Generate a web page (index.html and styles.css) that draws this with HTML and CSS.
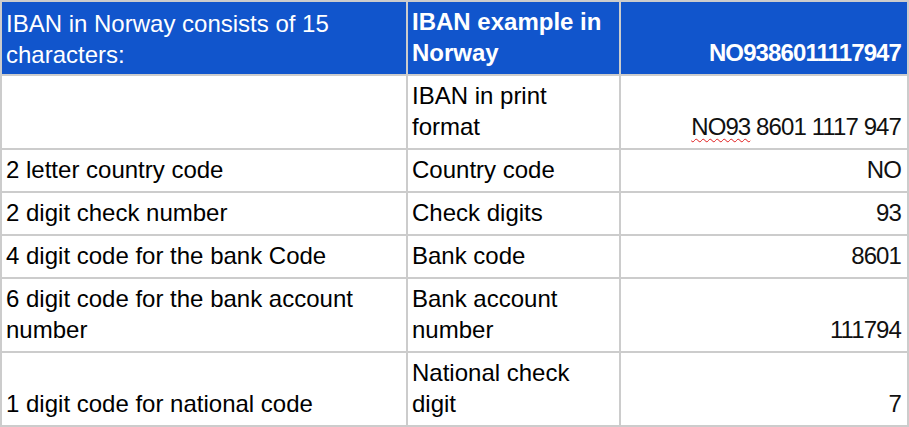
FILE: index.html
```html
<!DOCTYPE html>
<html lang="en">
<head>
<meta charset="utf-8">
<title>IBAN in Norway</title>
<link rel="stylesheet" href="styles.css">
</head>
<body>
<table class="iban">
  <colgroup>
    <col class="c1">
    <col class="c2">
    <col class="c3">
  </colgroup>
  <tr class="head">
    <td>IBAN in Norway consists of 15 characters:</td>
    <td class="bold">IBAN example in Norway</td>
    <td class="bold num">NO9386011117947</td>
  </tr>
  <tr>
    <td></td>
    <td>IBAN in print format</td>
    <td class="num"><span class="spell">NO93</span> 8601 1117 947</td>
  </tr>
  <tr>
    <td>2 letter country code</td>
    <td>Country code</td>
    <td class="num">NO</td>
  </tr>
  <tr>
    <td>2 digit check number</td>
    <td>Check digits</td>
    <td class="num">93</td>
  </tr>
  <tr>
    <td>4 digit code for the bank Code</td>
    <td>Bank code</td>
    <td class="num">8601</td>
  </tr>
  <tr>
    <td>6 digit code for the bank account number</td>
    <td>Bank account number</td>
    <td class="num">111794</td>
  </tr>
  <tr>
    <td>1 digit code for national code</td>
    <td>National check digit</td>
    <td class="num">7</td>
  </tr>
</table>
</body>
</html>
```

FILE: styles.css
```css
html, body {
  margin: 0;
  padding: 0;
  background: #ffffff;
}

.iban {
  border-collapse: collapse;
  table-layout: fixed;
  width: 907px;
  font-family: "Liberation Sans", Arial, sans-serif;
  font-size: 24px;
  line-height: 31px;
  color: #000000;
}

.c1 { width: 406px; }
.c2 { width: 213px; }
.c3 { width: 288px; }

.iban tr {
  height: 42px;
}

.iban td {
  border: 2px solid #cccccc;
  padding: 4px 5px 6px 4px;
  vertical-align: bottom;
  text-align: left;
  overflow: hidden;
}

.iban .head td {
  background: #1155cc;
  color: #ffffff;
}

.iban .head td:first-child {
  padding-bottom: 4px;
}

.iban .bold {
  font-weight: bold;
}

.iban .num {
  text-align: right;
  letter-spacing: -0.9px;
  padding-right: 6px;
  color: #111111;
}

.spell {
  text-decoration: underline wavy #e01b1b;
  text-decoration-thickness: 1px;
  text-underline-offset: 3px;
  text-decoration-skip-ink: none;
}
```
